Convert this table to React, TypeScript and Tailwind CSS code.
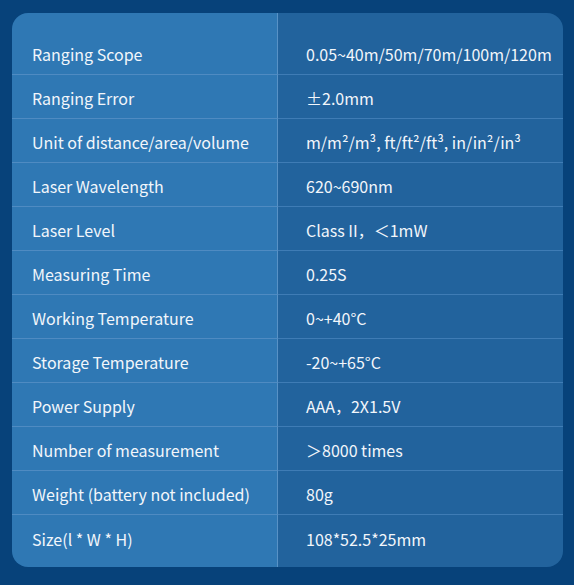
import React from "react";

const rows: [string, string][] = [
  ["Ranging Scope", "0.05~40m/50m/70m/100m/120m"],
  ["Ranging Error", "±2.0mm"],
  ["Unit of distance/area/volume", "m/m²/m³, ft/ft²/ft³, in/in²/in³"],
  ["Laser Wavelength", "620~690nm"],
  ["Laser Level", "Class II，＜1mW"],
  ["Measuring Time", "0.25S"],
  ["Working Temperature", "0~+40°C"],
  ["Storage Temperature", "-20~+65°C"],
  ["Power Supply", "AAA，2X1.5V"],
  ["Number of measurement", "＞8000 times"],
  ["Weight (battery not included)", "80g"],
  ["Size(l * W * H)", "108*52.5*25mm"],
];

export default function App() {
  return (
    <div
      className="w-[574px] h-[585px] bg-[#07427a] pt-[13px] pl-[12px]"
      style={{ fontFamily: '"Noto Sans CJK SC", "Noto Sans", sans-serif' }}
    >
      <div className="w-[551px] h-[554px] rounded-[16px] overflow-hidden flex flex-col text-[16px] text-[#f2f6fb]">
        <div className="flex h-[18px]">
          <div className="w-[266px] bg-[#2f78b4] border-r border-[#5892c6]" />
          <div className="flex-1 bg-[#22639d]" />
        </div>
        {rows.map(([k, v], i) => (
          <div key={i} className="flex h-[44px]">
            <div
              className={
                "w-[266px] bg-[#2f78b4] border-r border-[#5892c6] flex items-center pl-[20px] pt-[3px] " +
                (i < rows.length - 1 ? "border-b border-b-[#4f8bc2]" : "")
              }
            >
              {k}
            </div>
            <div
              className={
                "flex-1 bg-[#22639d] flex items-center pl-[28px] pt-[3px] " +
                (i < rows.length - 1 ? "border-b border-b-[#3f7cb5]" : "")
              }
            >
              {v}
            </div>
          </div>
        ))}
        <div className="flex flex-1">
          <div className="w-[266px] bg-[#2f78b4] border-r border-[#5892c6]" />
          <div className="flex-1 bg-[#22639d]" />
        </div>
      </div>
    </div>
  );
}
